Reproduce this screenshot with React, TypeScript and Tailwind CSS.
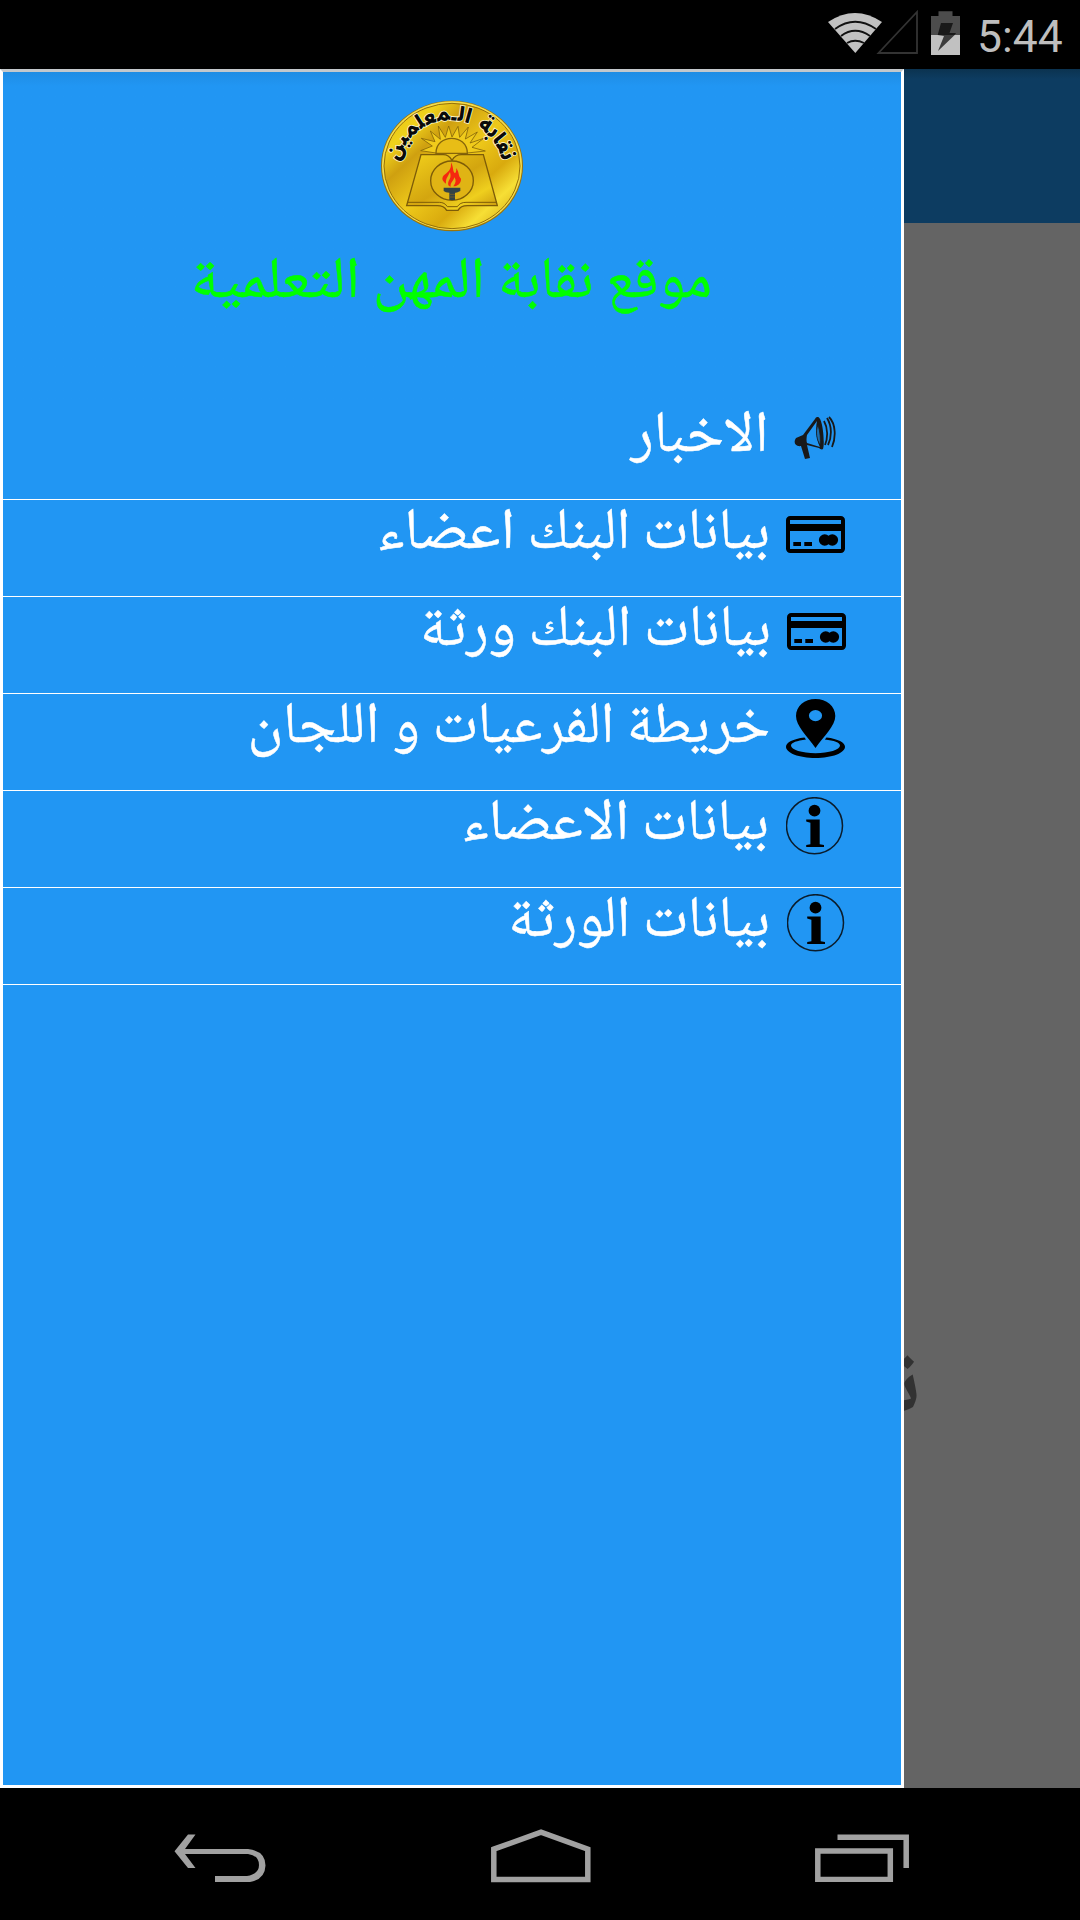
import { ReactNode } from "react";

const Logo = () => (
  <svg viewBox="0 0 540 450" className="h-[150px] w-[180px]" aria-hidden="true">
    <defs>
      <linearGradient id="gold" x1="0" y1="0" x2="1" y2="1">
        <stop offset="0" stopColor="#e3b90c" />
        <stop offset="0.2" stopColor="#f0d21c" />
        <stop offset="0.32" stopColor="#cfa010" />
        <stop offset="0.5" stopColor="#eec91a" />
        <stop offset="0.68" stopColor="#d9aa0e" />
        <stop offset="0.8" stopColor="#f7df35" />
        <stop offset="1" stopColor="#c9960c" />
      </linearGradient>
      <linearGradient id="page" x1="0" y1="0" x2="1" y2="1">
        <stop offset="0" stopColor="#f3d21c" />
        <stop offset="0.5" stopColor="#d3a50f" />
        <stop offset="0.75" stopColor="#efcf1e" />
        <stop offset="1" stopColor="#c4920c" />
      </linearGradient>
      <path id="arc" d="M116 222 A158 156 0 0 1 428 222" />
    </defs>
    <ellipse cx="276" cy="228" rx="213" ry="196" fill="#9c7408" />
    <ellipse cx="276" cy="227" rx="210" ry="193" fill="#f3dc4d" />
    <ellipse cx="276" cy="228" rx="204" ry="188" fill="url(#gold)" stroke="#957008" strokeWidth="3" />
    <path
      d="M228 189 L182 182 L217 168 L184 145 L225 155 L211 123 L241 148 L235 108 L256 142 L266 108 L276 141 L294 109 L299 142 L325 111 L316 147 L352 126 L330 159 L371 145 L336 172 L376 183 L322 189"
      fill="#f0cb1b"
      stroke="#86650a"
      strokeWidth="2.5"
      strokeLinejoin="miter"
    />
    <path d="M228 190 C228 130 322 130 322 190 Z" fill="#e8bd16" stroke="#86650a" strokeWidth="4" />
    <path
      d="M183 194 H250 Q266 194 276 211 Q286 194 304 194 H370 L412 347 H322 Q302 347 294 361 H260 Q252 347 232 347 H140 Z"
      fill="url(#page)"
      stroke="#7d5c08"
      strokeWidth="4"
    />
    <path d="M142 337 H238 Q254 337 262 350 H292 Q300 337 318 337 H410" fill="none" stroke="#7d5c08" strokeWidth="3" />
    <ellipse cx="276" cy="272" rx="64" ry="59" fill="#e0b414" stroke="#7d5c08" strokeWidth="4" />
    <path
      d="M273 217 C282 234 277 245 285 250 C290 245 289 238 288 234 C299 247 294 258 303 266 C304 279 292 290 280 289 C288 278 289 270 283 262 C280 275 270 278 272 290 C262 288 263 277 268 269 C274 260 271 251 270 246 C266 257 256 265 258 281 C241 270 246 259 259 250 C274 239 273 228 273 217 Z"
      fill="#f5280f"
    />
    <path d="M251 293 H301 V303 Q289 310 285 308 V330 H268 V308 Q256 308 251 303 Z" fill="#334347" />
    <path d="M269 313 H285 M269 321 H285" stroke="#6d5b2a" strokeWidth="3" />
    <text
      fontFamily="Noto Sans Arabic, DejaVu Sans, sans-serif"
      fontSize="60"
      fontWeight="900"
      textAnchor="middle"
      direction="rtl"
      fill="#0a0a0a"
      stroke="#fff6c8"
      strokeWidth="5"
      paintOrder="stroke"
      wordSpacing="8"
    >
      <textPath href="#arc" startOffset="50%">
        نقابة الـمعلمين
      </textPath>
    </text>
  </svg>
);

const Megaphone = () => (
  <svg viewBox="0 0 42 44" className="h-[44px] w-[42px]" aria-hidden="true">
    <path
      fillRule="evenodd"
      d="M24 1 C29 2 31 28 29 33 C28 34 26 33 25 32 L13 29 L16 42 L11 43 L7 30 C1 31 -1 26 2 22 L9 19 L21 3 C22 1 23 1 24 1 Z M23 5 L13 19 Q12 24 13 27 L26 31 C23 25 21 14 23 5 Z"
      fill="#191919"
    />
    <path d="M24 9 C21 16 23 24 26 29 C27 24 26 15 24 9 Z" stroke="#191919" strokeWidth="0.8" fill="#1b6fb3" />
    <path d="M30 5 C34 12 34 22 31 29 M33 2 C38 10 38 21 34 29 M35 1 C42 8 42 22 38 31" fill="none" stroke="#191919" strokeWidth="1.8" />
  </svg>
);

const BankCard = () => (
  <svg viewBox="0 0 59 37" className="h-[37px] w-[59px]" aria-hidden="true">
    <rect x="2" y="2" width="55" height="33" rx="2.2" fill="none" stroke="#000" strokeWidth="4" />
    <path d="M2 8 H57 V15 H2 Z M7.3 26 H15 V30 H7.3 Z M18.3 26 H26 V30 H18.3 Z" />
    <circle cx="38.7" cy="24" r="5.8" />
    <circle cx="46.3" cy="24" r="5.8" />
  </svg>
);

const MapPin = () => (
  <svg viewBox="0 0 59 59" className="h-[59px] w-[59px]" aria-hidden="true">
    <path
      fillRule="evenodd"
      d="M29.5 0 C40.5 0 49.3 7 49.3 17 C49.3 27 38 37 29.5 49 C21 37 10 27 10 17 C10 7 18.5 0 29.5 0 Z M29.5 11 A6.6 5.6 0 1 0 29.5 22.2 A6.6 5.6 0 1 0 29.5 11 Z"
    />
    <path
      fillRule="evenodd"
      d="M18.5 38.6 C7 40 0 43.5 0 47.8 C0 54 13 59 29.5 59 C46 59 59 54 59 47.8 C59 43.5 52 40 40.5 38.6 L38.8 40.5 C48 41.5 54 43.5 54 46.6 C54 51 43 54.2 29.5 54.2 C16 54.2 5 51 5 46.6 C5 43.5 11 41.5 20 40.4 Z"
    />
  </svg>
);

const Info = () => (
  <svg viewBox="0 0 58 58" className="h-[58px] w-[58px]" aria-hidden="true">
    <circle cx="28.5" cy="28.7" r="28" fill="none" stroke="#0b1c2b" strokeWidth="1.5" />
    <circle cx="28.5" cy="13.7" r="5.9" />
    <path d="M20.2 22.4 H33.7 V47.2 L38 48 V50 H20.2 V48 L24.4 47.2 V25.7 L20.2 24.5 Z" />
  </svg>
);

const Status = () => (
  <header className="flex h-[69px] shrink-0 items-start justify-end bg-black pr-[17px]">
    <svg viewBox="0 0 140 60" className="h-[60px] w-[140px]" aria-hidden="true">
      <path d="M8 22 Q35 4 62 22 L35.3 53 Z" fill="#c1c1c1" />
      <path d="M15 29 Q35 14.5 56 29 M21 36 Q35 25.5 50 36 M27 43 Q35 38.5 44 43" fill="none" stroke="#111" strokeWidth="1.8" />
      <path d="M97 12 V53 H58.5 Z" fill="none" stroke="#333" strokeWidth="1.8" />
      <path d="M111 35 V16 H118.5 V11.3 H132.5 V16 H140 V35 Z" fill="#4c4c4c" />
      <path d="M111 35 H140 V55 H111 Z" fill="#c1c1c1" />
      <path d="M121 23 H133 L129.5 33 H136 L134.7 35 H117.7 Z" fill="#191919" />
      <path d="M117.7 35 H134.7 L118 51 L124 36 Z" fill="#3c3c3c" />
    </svg>
    <span className="mt-[11px] mr-[2px] ml-[17px] w-[84px] origin-left scale-x-[1.01] font-[Roboto,sans-serif] text-[44px] leading-[52px] whitespace-nowrap text-[#bebebe]">
      5:44
    </span>
  </header>
);

const NavBar = () => (
  <nav className="flex h-[132px] shrink-0 items-start bg-black text-[#a1a1a1]">
    <svg viewBox="0 0 92 50" className="mt-[46px] ml-[174px] h-[50px] w-[92px]" fill="currentColor" aria-hidden="true">
      <path d="M14 0.5 H21.5 L11 15 H74 Q91.5 17 91.5 31.5 Q91 45.5 76 48 H41 V42 H73 Q85 40 85 31 Q85 21.5 74 20 H11 L21.5 34 H14 L0.5 17.3 Z" />
    </svg>
    <svg viewBox="0 0 100 54" className="mt-[41px] ml-[225px] h-[54px] w-[100px]" fill="none" stroke="currentColor" strokeWidth="5.5" aria-hidden="true">
      <path d="M2.8 20.2 L50 3.2 L96.8 20.2 V50.5 H2.8 Z" />
    </svg>
    <svg viewBox="0 0 94 48" className="mt-[46px] ml-[224px] h-[48px] w-[94px]" fill="none" stroke="currentColor" strokeWidth="5.5" aria-hidden="true">
      <rect x="2.8" y="17" width="72.5" height="28.5" />
      <path d="M22.5 3.2 H91.2 V34" />
    </svg>
  </nav>
);

type Item = { head: string; tail: string; stretch: string; icon: ReactNode; iconBox: string; gap: string };

const items: Item[] = [
  { head: "", tail: "الاخبار", stretch: "scale-x-[1.025]", icon: <Megaphone />, iconBox: "mr-[65px] pt-[13px]", gap: "mr-[25px]" },
  { head: "بيانات البنك ", tail: "اعضاء", stretch: "scale-x-[1.08]", icon: <BankCard />, iconBox: "mr-[56px] pt-[16px]", gap: "mr-[16px]" },
  { head: "بيانات البنك ", tail: "ورثة", stretch: "", icon: <BankCard />, iconBox: "mr-[55px] pt-[16px]", gap: "mr-[16px]" },
  { head: "خريطة الفرعيات و ", tail: "اللجان", stretch: "scale-x-[1.035]", icon: <MapPin />, iconBox: "mr-[56px] pt-[5px]", gap: "mr-[16px]" },
  { head: "بيانات ", tail: "الاعضاء", stretch: "scale-x-[1.06]", icon: <Info />, iconBox: "mr-[57px] pt-[6px]", gap: "mr-[17px]" },
  { head: "بيانات ", tail: "الورثة", stretch: "", icon: <Info />, iconBox: "mr-[56px] pt-[6px]", gap: "mr-[17px]" },
];

const Drawer = () => (
  <aside
    dir="rtl"
    className="flex w-[904px] shrink-0 flex-col border-[3px] border-t-[#c3c8cc] border-r-white border-b-white border-l-white bg-[#2196f3] font-['Noto_Naskh_Arabic','DejaVu_Sans',serif]"
  >
    <div className="flex h-[331px] shrink-0 flex-col items-center bg-linear-to-b from-[#1f8de4] to-[#2196f3] to-[14px]">
      <div dir="ltr" className="mt-[18px] mr-[4px]">
        <Logo />
      </div>
      <h1 className="-mt-[1px] ml-[12px] text-[58px] leading-[92px] whitespace-nowrap text-[#00ff00] [-webkit-text-stroke:0.5px]">
        موقع نقابة <span className="inline-block origin-right scale-x-[1.06]">المهن</span>{" "}
        <span className="mr-[6px] inline-block origin-right scale-x-[1.085]">التعلمية</span>
      </h1>
    </div>
    <ul className="flex flex-col">
      {items.map((item) => (
        <li key={item.tail} className="flex h-[97px] items-start border-b border-white">
          <div className={item.iconBox}>{item.icon}</div>
          <span className={`${item.gap} mt-[-10px] text-[58px] leading-[92px] whitespace-nowrap text-white [-webkit-text-stroke:0.5px]`}>
            {item.head}
            <span className={`inline-block origin-right ${item.stretch}`}>{item.tail}</span>
          </span>
        </li>
      ))}
    </ul>
  </aside>
);

export default function App() {
  return (
    <div className="flex h-[1920px] w-[1080px] flex-col overflow-hidden bg-black">
      <Status />
      <main className="flex h-[1719px] shrink-0">
        <Drawer />
        <section className="flex w-[176px] flex-col bg-[#646464]">
          <div className="h-[154px] bg-linear-to-b from-[#0b3350] to-[#0d3c61] to-[10px]" />
          <div className="mt-[1100px] flex h-[140px] w-[16px] justify-end overflow-hidden font-['Noto_Naskh_Arabic','DejaVu_Sans',serif] text-[92px] leading-[140px] font-bold text-[#323232]">
            <span>ن‍</span>
          </div>
        </section>
      </main>
      <NavBar />
    </div>
  );
}
